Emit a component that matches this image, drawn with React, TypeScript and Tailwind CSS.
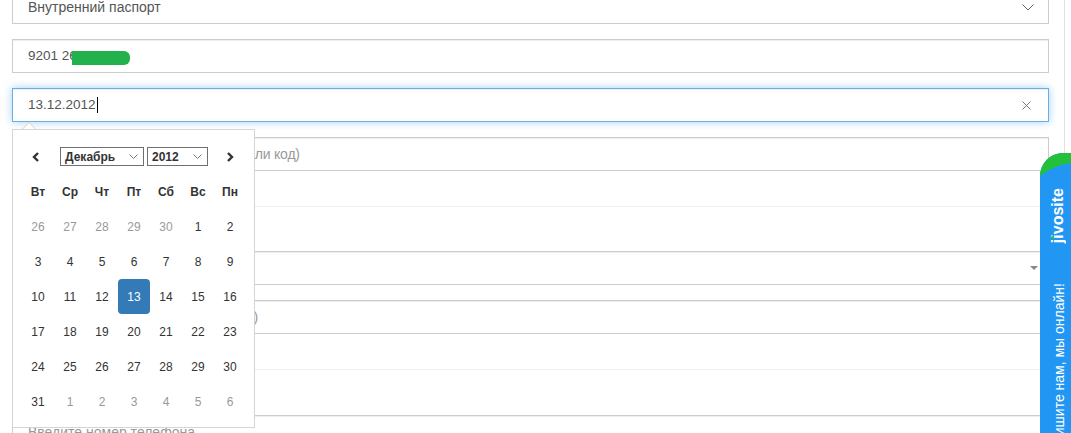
import React from "react";

const prevDays = [26, 27, 28, 29, 30];
const nextDays = [1, 2, 3, 4, 5, 6];

function Cell({ d, muted, active }: { d: number; muted?: boolean; active?: boolean }) {
  if (active) {
    return (
      <div className="flex h-[35px] w-[32px] items-center justify-center rounded-[4px] bg-[#337ab7] text-white">
        {d}
      </div>
    );
  }
  return (
    <div className={`flex h-[35px] w-[32px] items-center justify-center ${muted ? "text-[#999]" : "text-[#333]"}`}>
      {d}
    </div>
  );
}

function Calendar() {
  const cells: { d: number; muted?: boolean }[] = [];
  prevDays.forEach((d) => cells.push({ d, muted: true }));
  for (let i = 1; i <= 31; i++) cells.push({ d: i });
  nextDays.forEach((d) => cells.push({ d, muted: true }));
  const heads = ["Вт", "Ср", "Чт", "Пт", "Сб", "Вс", "Пн"];
  return (
    <div className="absolute left-[12px] top-[129px] h-[299px] w-[243px] border border-[#d5d5d5] bg-white pl-[9px] pt-[9px] text-[12px]">
      <div className="flex h-[35px] w-[224px] items-center">
        <div className="flex w-[32px] items-center justify-center pr-[4px]">
          <svg width="8" height="10" viewBox="0 0 8 10">
            <path d="M6 1L2 5L6 9" fill="none" stroke="#333" strokeWidth="2.4" />
          </svg>
        </div>
        <div className="flex w-[160px] items-center justify-center gap-[3px]">
          <div className="flex h-[19px] w-[84px] items-center justify-between border border-[#707070] pl-[4px] pr-[5px] font-bold text-[#333]">
            <span>Декабрь</span>
            <svg width="9" height="5" viewBox="0 0 9 5">
              <path d="M0.5 0.5L4.5 4.5L8.5 0.5" fill="none" stroke="#777" strokeWidth="1" />
            </svg>
          </div>
          <div className="flex h-[19px] w-[61px] items-center justify-between border border-[#707070] pl-[4px] pr-[5px] font-bold text-[#333]">
            <span>2012</span>
            <svg width="9" height="5" viewBox="0 0 9 5">
              <path d="M0.5 0.5L4.5 4.5L8.5 0.5" fill="none" stroke="#777" strokeWidth="1" />
            </svg>
          </div>
        </div>
        <div className="flex w-[32px] items-center justify-center">
          <svg width="8" height="10" viewBox="0 0 8 10">
            <path d="M2 1L6 5L2 9" fill="none" stroke="#333" strokeWidth="2.4" />
          </svg>
        </div>
      </div>
      <div className="grid w-[224px] grid-cols-7">
        {heads.map((h) => (
          <div key={h} className="flex h-[35px] w-[32px] items-center justify-center font-bold text-[#333]">
            {h}
          </div>
        ))}
        {cells.map((c, i) => (
          <Cell key={i} d={c.d} muted={c.muted} active={!c.muted && c.d === 13} />
        ))}
      </div>
    </div>
  );
}

const inputBase =
  "mb-[15px] flex h-[34px] shrink-0 items-center border border-[#ccc] pl-[15px] text-[14px] text-[#555] shadow-[inset_0_1px_1px_rgba(0,0,0,0.075)]";

export default function App() {
  return (
    <div className="relative h-[433px] w-[1071px] overflow-hidden bg-white font-['Liberation_Sans',Arial,sans-serif]">
      <div className="mt-[-10px] flex min-h-[470px] w-[1065px] flex-col border-r border-[#e2e2e2] pl-[12px] pr-[15px]">
        <div className={`${inputBase} justify-between pr-[14px]`}>
          <span>Внутренний паспорт</span>
          <svg width="12" height="7" viewBox="0 0 12 7">
            <path d="M0.5 0.5L6 6L11.5 0.5" fill="none" stroke="#666" strokeWidth="1" />
          </svg>
        </div>
        <div className={`${inputBase} relative`}>
          <span className="text-[13.5px]">9201 26</span>
          <div className="absolute left-[59px] top-[11px] h-[14px] w-[58px] rounded-r-[6px] bg-[#22b14c]" />
        </div>
        <div className="mb-[15px] flex h-[34px] shrink-0 items-center justify-between border border-[#66afe9] pl-[15px] pr-[17px] text-[13.5px] text-[#555] shadow-[inset_0_1px_1px_rgba(0,0,0,0.075),0_0_8px_rgba(102,175,233,0.6)]">
          <span className="flex items-center">
            13.12.2012
            <span className="ml-[1px] inline-block h-[16px] w-[1px] bg-black" />
          </span>
          <svg width="9" height="9" viewBox="0 0 9 9">
            <path d="M0.5 0.5L8.5 8.5M8.5 0.5L0.5 8.5" fill="none" stroke="#777" strokeWidth="1" />
          </svg>
        </div>
        <div className={inputBase}>
          <span className="tracking-[-0.2px] text-[#999]">Кем выдан (наименование органа или код)</span>
        </div>
        <div className="mb-[20px] mt-[20px] shrink-0 border-t border-[#eee]" />
        <div className="h-[24px] shrink-0" />
        <div className={`${inputBase} justify-end pr-[10px]`}>
          <svg width="8" height="4" viewBox="0 0 8 4">
            <path d="M0 0H8L4 4Z" fill="#888" />
          </svg>
        </div>
        <div className={inputBase}>
          <span className="tracking-[0.15px] text-[#999]">Место рождения (как в документе)</span>
        </div>
        <div className="mb-[20px] mt-[20px] shrink-0 border-t border-[#eee]" />
        <div className="h-[25px] shrink-0" />
        <div className={inputBase}>
          <span className="text-[#999]">Введите номер телефона</span>
        </div>
      </div>

      <svg className="absolute left-[21px] top-[122px]" width="16" height="8" viewBox="0 0 16 8">
        <path d="M0 8L8 0.5L16 8Z" fill="#fff" />
        <path d="M0.5 8L8 0.7L15.5 8" fill="none" stroke="#cfcfcf" strokeWidth="1" />
      </svg>
      <Calendar />

      <div className="absolute bottom-0 right-0 top-[153px] w-[31px] rounded-tl-[23px] bg-[#2196f3]">
        <svg className="absolute left-0 top-0" width="31" height="24" viewBox="0 0 31 24">
          <path d="M0 23A23 23 0 0 1 23 0L31 0L31 10Q14 12 0 23Z" fill="#22c03c" />
        </svg>
        <span className="absolute left-[11px] top-[35px] rotate-180 text-[16px] font-bold leading-[14px] text-white [writing-mode:vertical-rl]">
          jivosite
        </span>
        <div className="absolute left-[11px] top-[83px] h-[3px] w-[3px] rounded-full bg-[#22c03c]" />
        <span className="absolute left-[12px] top-[130px] rotate-180 whitespace-nowrap text-[14px] leading-[14px] text-white [writing-mode:vertical-rl]">
          Напишите нам, мы онлайн!
        </span>
      </div>
    </div>
  );
}
